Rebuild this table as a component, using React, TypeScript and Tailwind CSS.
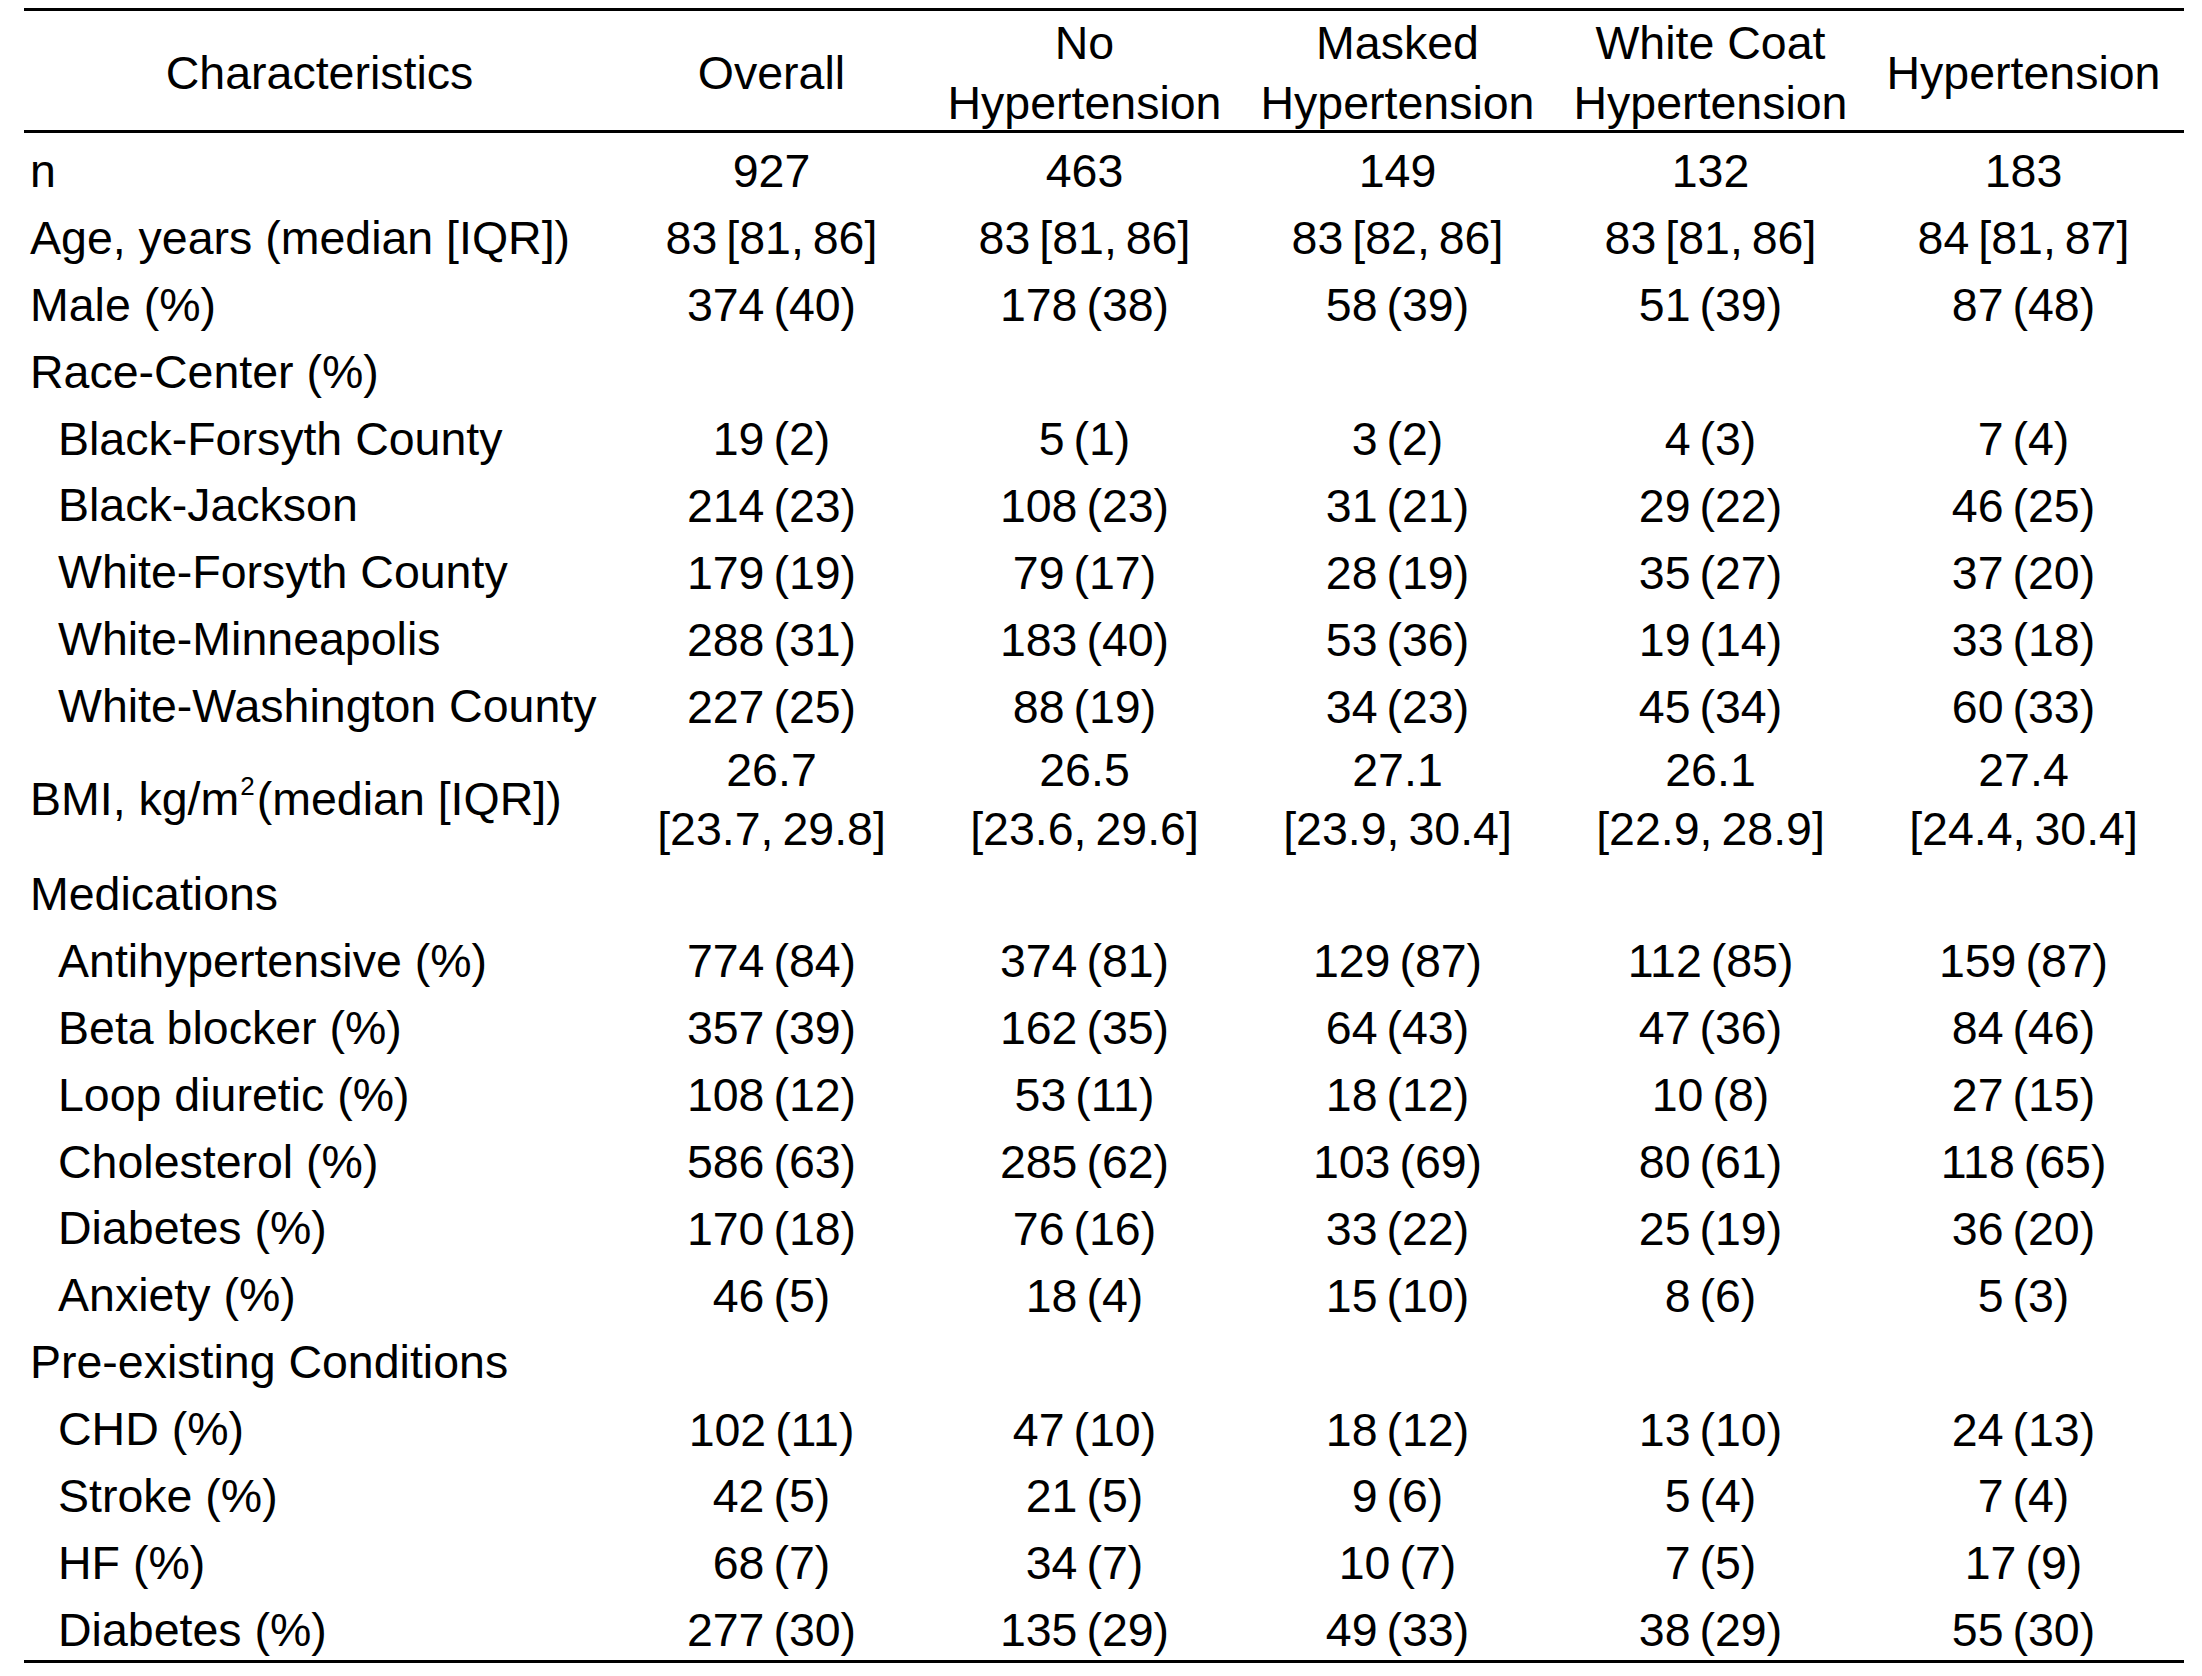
import React from "react";

type Row = {
  label: React.ReactNode;
  indent?: boolean;
  values?: string[];
  bmi?: boolean;
};

const rows: Row[] = [
  { label: "n", values: ["927", "463", "149", "132", "183"] },
  { label: "Age, years (median [IQR])", values: ["83 [81, 86]", "83 [81, 86]", "83 [82, 86]", "83 [81, 86]", "84 [81, 87]"] },
  { label: "Male (%)", values: ["374 (40)", "178 (38)", "58 (39)", "51 (39)", "87 (48)"] },
  { label: "Race-Center (%)" },
  { label: "Black-Forsyth County", indent: true, values: ["19 (2)", "5 (1)", "3 (2)", "4 (3)", "7 (4)"] },
  { label: "Black-Jackson", indent: true, values: ["214 (23)", "108 (23)", "31 (21)", "29 (22)", "46 (25)"] },
  { label: "White-Forsyth County", indent: true, values: ["179 (19)", "79 (17)", "28 (19)", "35 (27)", "37 (20)"] },
  { label: "White-Minneapolis", indent: true, values: ["288 (31)", "183 (40)", "53 (36)", "19 (14)", "33 (18)"] },
  { label: "White-Washington County", indent: true, values: ["227 (25)", "88 (19)", "34 (23)", "45 (34)", "60 (33)"] },
  {
    label: (
      <>
        BMI, kg/m<sup className="text-[26px] relative top-[-3px] align-super leading-none ml-[1px] mr-[2px]">2</sup>(median [IQR])
      </>
    ),
    bmi: true,
    values: ["26.7|[23.7, 29.8]", "26.5|[23.6, 29.6]", "27.1|[23.9, 30.4]", "26.1|[22.9, 28.9]", "27.4|[24.4, 30.4]"],
  },
  { label: "Medications" },
  { label: "Antihypertensive (%)", indent: true, values: ["774 (84)", "374 (81)", "129 (87)", "112 (85)", "159 (87)"] },
  { label: "Beta blocker (%)", indent: true, values: ["357 (39)", "162 (35)", "64 (43)", "47 (36)", "84 (46)"] },
  { label: "Loop diuretic (%)", indent: true, values: ["108 (12)", "53 (11)", "18 (12)", "10 (8)", "27 (15)"] },
  { label: "Cholesterol (%)", indent: true, values: ["586 (63)", "285 (62)", "103 (69)", "80 (61)", "118 (65)"] },
  { label: "Diabetes (%)", indent: true, values: ["170 (18)", "76 (16)", "33 (22)", "25 (19)", "36 (20)"] },
  { label: "Anxiety (%)", indent: true, values: ["46 (5)", "18 (4)", "15 (10)", "8 (6)", "5 (3)"] },
  { label: "Pre-existing Conditions" },
  { label: "CHD (%)", indent: true, values: ["102 (11)", "47 (10)", "18 (12)", "13 (10)", "24 (13)"] },
  { label: "Stroke (%)", indent: true, values: ["42 (5)", "21 (5)", "9 (6)", "5 (4)", "7 (4)"] },
  { label: "HF (%)", indent: true, values: ["68 (7)", "34 (7)", "10 (7)", "7 (5)", "17 (9)"] },
  { label: "Diabetes (%)", indent: true, values: ["277 (30)", "135 (29)", "49 (33)", "38 (29)", "55 (30)"] },
];

const headers: string[][] = [
  ["Overall"],
  ["No", "Hypertension"],
  ["Masked", "Hypertension"],
  ["White Coat", "Hypertension"],
  ["Hypertension"],
];

export default function App() {
  return (
    <div
      className="w-[2202px] h-[1676px] bg-white text-black text-[46.5px] overflow-hidden"
      style={{ fontFamily: '"Liberation Sans", Arial, sans-serif' }}
    >
      <div className="ml-[24px] mt-[8px] w-[2160px] border-t-[3px] border-b-[3px] border-black">
        <div className="grid grid-cols-[591px_repeat(5,313px)] h-[122px] pt-[2px] border-b-[3px] border-black leading-[60px]">
          <div className="flex items-center justify-center">Characteristics</div>
          {headers.map((h, i) => (
            <div key={i} className="flex flex-col items-center justify-center text-center whitespace-nowrap">
              {h.map((l, j) => (
                <span key={j}>{l}</span>
              ))}
            </div>
          ))}
        </div>
        <div className="h-[1527px] pt-[4px]">
          {rows.map((r, i) => (
            <div
              key={i}
              className={`grid grid-cols-[591px_repeat(5,313px)] ${r.bmi ? "h-[121px]" : "h-[66.9px]"}`}
            >
              <div className={`flex items-center whitespace-nowrap ${r.indent ? "pl-[34px]" : "pl-[6px]"}`}>
                <span>{r.label}</span>
              </div>
              {(r.values ?? ["", "", "", "", ""]).map((v, j) => (
                <div
                  key={j}
                  className="flex flex-col items-center justify-center text-center whitespace-nowrap leading-[59px] [word-spacing:-4px]"
                >
                  {r.bmi ? v.split("|").map((p, k) => <span key={k}>{p}</span>) : <span>{v}</span>}
                </div>
              ))}
            </div>
          ))}
        </div>
      </div>
    </div>
  );
}
